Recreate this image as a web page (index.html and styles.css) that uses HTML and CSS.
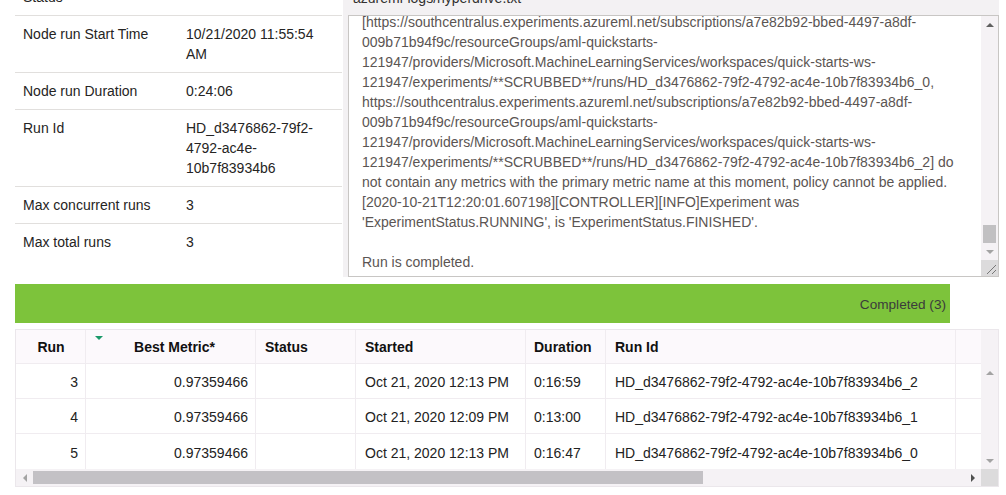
FILE: index.html
```html
<!DOCTYPE html>
<html>
<head>
<meta charset="utf-8">
<link rel="stylesheet" href="styles.css">
</head>
<body>
<div class="page">
  <div class="top">
    <div class="props">
      <div class="prow"><div class="plabel">Status</div><div class="pval"></div></div>
      <div class="prow"><div class="plabel">Node run Start Time</div><div class="pval">10/21/2020 11:55:54 AM</div></div>
      <div class="prow"><div class="plabel">Node run Duration</div><div class="pval">0:24:06</div></div>
      <div class="prow"><div class="plabel">Run Id</div><div class="pval">HD_d3476862-79f2-<br>4792-ac4e-<br>10b7f83934b6</div></div>
      <div class="prow"><div class="plabel">Max concurrent runs</div><div class="pval">3</div></div>
      <div class="prow last"><div class="plabel">Max total runs</div><div class="pval">3</div></div>
    </div>
    <div class="logpanel">
      <div class="loghead">azureml-logs/hyperdrive.txt</div>
      <div class="logbox">
        <div class="logtext">
          <div class="ln">[https://southcentralus.experiments.azureml.net/subscriptions/a7e82b92-bbed-4497-a8df-</div>
          <div class="ln">009b71b94f9c/resourceGroups/aml-quickstarts-</div>
          <div class="ln">121947/providers/Microsoft.MachineLearningServices/workspaces/quick-starts-ws-</div>
          <div class="ln">121947/experiments/**SCRUBBED**/runs/HD_d3476862-79f2-4792-ac4e-10b7f83934b6_0,</div>
          <div class="ln">https://southcentralus.experiments.azureml.net/subscriptions/a7e82b92-bbed-4497-a8df-</div>
          <div class="ln">009b71b94f9c/resourceGroups/aml-quickstarts-</div>
          <div class="ln">121947/providers/Microsoft.MachineLearningServices/workspaces/quick-starts-ws-</div>
          <div class="ln">121947/experiments/**SCRUBBED**/runs/HD_d3476862-79f2-4792-ac4e-10b7f83934b6_2] do</div>
          <div class="ln">not contain any metrics with the primary metric name at this moment, policy cannot be applied.</div>
          <div class="ln">[2020-10-21T12:20:01.607198][CONTROLLER][INFO]Experiment was</div>
          <div class="ln">'ExperimentStatus.RUNNING', is 'ExperimentStatus.FINISHED'.</div>
          <div class="ln">&nbsp;</div>
          <div class="ln">Run is completed.</div>
        </div>
        <div class="vscroll">
          <div class="sbtn"><span class="arr-up dark"></span></div>
          <div class="strack"><div class="sthumb"></div></div>
          <div class="sbtn"><span class="arr-down"></span></div>
          <div class="resizer">
            <svg width="17" height="16" viewBox="0 0 17 16"><path d="M15 5 L6 14 M15 10 L11 14" stroke="#777" stroke-width="1" fill="none"/></svg>
          </div>
        </div>
      </div>
    </div>
  </div>

  <div class="statusbar"><span class="stext">Completed (3)</span></div>

  <div class="grid">
    <div class="gmain">
      <div class="gcols">
        <div class="gtable">
          <div class="gr head">
            <div class="c c1 ctr">Run</div>
            <div class="c c2 rt hm">Best Metric*<span class="sort"></span></div>
            <div class="c c3">Status</div>
            <div class="c c4">Started</div>
            <div class="c c5">Duration</div>
            <div class="c c6">Run Id</div>
            <div class="c c7"></div>
          </div>
          <div class="gr">
            <div class="c c1 rt">3</div>
            <div class="c c2 rt">0.97359466</div>
            <div class="c c3"></div>
            <div class="c c4">Oct 21, 2020 12:13 PM</div>
            <div class="c c5">0:16:59</div>
            <div class="c c6">HD_d3476862-79f2-4792-ac4e-10b7f83934b6_2</div>
            <div class="c c7"></div>
          </div>
          <div class="gr">
            <div class="c c1 rt">4</div>
            <div class="c c2 rt">0.97359466</div>
            <div class="c c3"></div>
            <div class="c c4">Oct 21, 2020 12:09 PM</div>
            <div class="c c5">0:13:00</div>
            <div class="c c6">HD_d3476862-79f2-4792-ac4e-10b7f83934b6_1</div>
            <div class="c c7"></div>
          </div>
          <div class="gr">
            <div class="c c1 rt">5</div>
            <div class="c c2 rt">0.97359466</div>
            <div class="c c3"></div>
            <div class="c c4">Oct 21, 2020 12:13 PM</div>
            <div class="c c5">0:16:47</div>
            <div class="c c6">HD_d3476862-79f2-4792-ac4e-10b7f83934b6_0</div>
            <div class="c c7"></div>
          </div>
        </div>
        <div class="gvscroll">
          <div class="gvhead"></div>
          <div class="sbtn2"><span class="arr-up"></span></div>
          <div class="gvfill"></div>
          <div class="sbtn2"><span class="arr-down"></span></div>
        </div>
      </div>
      <div class="ghscroll">
        <div class="htrack">
          <div class="hbtn"><span class="arr-left"></span></div>
          <div class="hthumb"></div>
          <div class="hfill"></div>
          <div class="hbtn"><span class="arr-right"></span></div>
        </div>
        <div class="corner"></div>
      </div>
    </div>
  </div>
</div>
</body>
</html>
```

FILE: styles.css
```css
* { box-sizing: border-box; }
html, body { margin: 0; padding: 0; background: #fff; }
body {
  font-family: "Liberation Sans", Arial, sans-serif;
  font-size: 14px;
  color: #252423;
  width: 1006px;
  height: 495px;
  overflow: hidden;
}
.page { padding-left: 15px; }

.top {
  display: flex;
  margin-top: -22px;
  height: 299px;
}
.props { width: 327px; margin-top: 1px; }
.prow {
  display: flex;
  line-height: 20px;
  padding: 8px 0 8px 0;
  border-bottom: 1px solid #e1dfdd;
}
.prow.last { border-bottom: none; }
.plabel { width: 171px; padding-left: 8px; flex: none; color: #252423; }
.pval { width: 148px; flex: none; color: #252423; }

.logpanel {
  margin-left: 1px;
  width: 656px;
  background: #f3f1f3;
  padding-left: 5px;
  align-self: flex-start;
}
.loghead {
  height: 37px;
  padding: 10px 0 0 5px;
  line-height: 20px;
  color: #323130;
}
.logbox {
  width: 651px;
  height: 262px;
  border: 1px solid #c8c6c4;
  background: #fff;
  display: flex;
}
.logtext {
  flex: 1;
  overflow: hidden;
  padding-left: 13px;
  color: #5b5553;
  line-height: 20px;
}
.logtext .ln { white-space: nowrap; }
.logtext .ln:first-child { margin-top: -4px; }

.vscroll {
  width: 17px;
  flex: none;
  background: #f5f2f5;
  display: flex;
  flex-direction: column;
}
.sbtn {
  height: 17px;
  display: flex;
  align-items: center;
  justify-content: center;
}
.strack { flex: 1; display: flex; flex-direction: column; justify-content: flex-end; }
.sthumb { height: 18px; margin: 0 2px; background: #c1c0c2; }
.resizer { height: 16px; background: #dcdbdc; }
.resizer svg { display: block; }

.arr-up, .arr-down, .arr-left, .arr-right { width: 0; height: 0; display: block; }
.arr-up { border-left: 4px solid transparent; border-right: 4px solid transparent; border-bottom: 4px solid #a3a3a3; }
.arr-up.dark { border-bottom-color: #606060; }
.arr-down { border-left: 4px solid transparent; border-right: 4px solid transparent; border-top: 4px solid #a3a3a3; }
.arr-left { border-top: 4px solid transparent; border-bottom: 4px solid transparent; border-right: 4px solid #a3a3a3; }
.arr-right { border-top: 4px solid transparent; border-bottom: 4px solid transparent; border-left: 4px solid #505050; }

.statusbar {
  margin-top: 7px;
  width: 935px;
  height: 39px;
  background: #7dc33b;
  display: flex;
  align-items: center;
  justify-content: flex-end;
  padding-right: 4px;
}
.stext { font-size: 13.6px; color: #3b3b3b; margin-top: 1px; }

.grid {
  margin-top: 6px;
  width: 984px;
  border: 1px solid #ebe7eb;
}
.gcols { display: flex; }
.gtable { width: 965px; }
.gr { display: flex; height: 35px; border-bottom: 1px solid #f0ecf0; }
.gr.head { height: 34px; background: #fcf9fc; font-weight: bold; color: #111; }
.gr:last-child { border-bottom: none; }
.gr:not(.head) .c { padding-top: 2px; }
.c {
  border-right: 1px solid #f0ecf0;
  display: flex;
  align-items: center;
  padding: 0 0 0 9px;
  white-space: nowrap;
  color: #222;
  position: relative;
}
.gr.head .c { color: #111; padding-top: 1px; }
.c1 { width: 70px; }
.c2 { width: 170px; }
.c3 { width: 100px; }
.c4 { width: 170px; }
.c5 { width: 80px; padding-left: 8px; }
.c6 { width: 350px; }
.c7 { width: 25px; border-right: none; }
.ctr { justify-content: center; padding: 0 0 0 1px; }
.rt { justify-content: flex-end; padding: 0 7px 0 0; }
.c1.rt { padding-right: 7px; }
.hm { padding-right: 40px; }
.sort {
  position: absolute;
  left: 9px;
  top: 6px;
  width: 0; height: 0;
  border-left: 4px solid transparent;
  border-right: 4px solid transparent;
  border-top: 4px solid #1b9a6a;
}

.gvscroll {
  width: 17px;
  background: #f5f2f5;
  display: flex;
  flex-direction: column;
}
.gvhead { height: 34px; }
.sbtn2 { height: 17px; display: flex; align-items: center; justify-content: center; }
.gvfill { flex: 1; }

.ghscroll { display: flex; height: 17px; }
.htrack {
  width: 965px;
  background: #f5f2f5;
  display: flex;
  align-items: center;
}
.hbtn { width: 17px; height: 17px; display: flex; align-items: center; justify-content: center; flex: none; }
.hthumb { width: 670px; height: 13px; background: #c3c1c5; }
.hfill { flex: 1; }
.corner { width: 17px; background: #dcdbdc; }
```
